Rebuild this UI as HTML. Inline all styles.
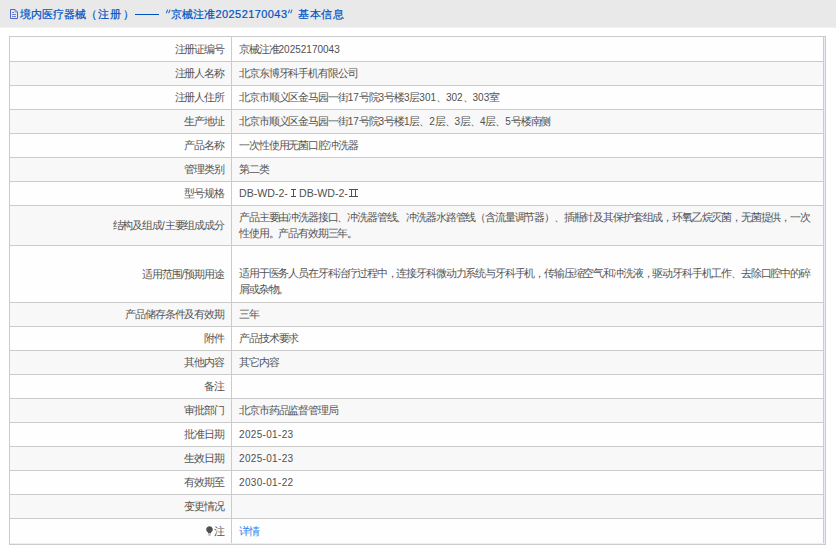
<!DOCTYPE html>
<html><head><meta charset="utf-8">
<style>
*{margin:0;padding:0;box-sizing:border-box}
html,body{width:836px;height:548px;overflow:hidden;background:#fff;font-family:"Liberation Sans",sans-serif;}
.hd{position:absolute;left:0;top:0;width:836px;height:28px;background:#e9e9e9;border-bottom:1px solid #eef0f6;}
.hd .t{position:absolute;top:6px;font-size:11px;line-height:16px;color:#0052c2;white-space:nowrap;-webkit-text-stroke:0.2px #0052c2}
.hd svg{position:absolute;left:10px;top:9px}
.ob{position:absolute;left:9px;top:36px;width:817px;height:509px;border:1px solid #cbcbcb;background:#eceef6}
.r{position:absolute;left:10px;width:814px;border-right:1px solid #cbcbcb;}
.r.o{background:#fefefe}
.r.e{background:#f8f8f8}
.hl{position:absolute;left:10px;width:814px;height:1px;background:#cbcbcb}
.vl{position:absolute;left:231px;top:37px;width:1px;height:506px;background:#cbcbcb}
.l{position:absolute;left:0;top:0;bottom:0;width:221px;}
.lt{position:absolute;right:7px;font-size:11px;letter-spacing:-1.12px;line-height:16px;color:#555;white-space:nowrap}
.v{position:absolute;left:229px;right:8px;font-size:11px;letter-spacing:-1.12px;line-height:16px;color:#555;white-space:nowrap}
.n{font-size:10px;letter-spacing:0;color:#505050}
.rn{font-family:"Liberation Serif",serif;font-size:10px;letter-spacing:0}
.v a{color:#2f83f0}

</style></head><body>
<div class="hd">
<svg width="8" height="10" viewBox="0 0 8 10"><path d="M0.5 0.5H5L7.5 3V9.5H0.5Z" fill="none" stroke="#4468d0" stroke-width="1"/><path d="M5 0.5V3H7.5" fill="none" stroke="#5b8ad8" stroke-width="0.8"/><path d="M2 3.5H4M2 5.5H6M2 7.5H6" stroke="#7b80d4" stroke-width="1"/></svg>
<span class="t" style="left:20px">境内医疗器械</span>
<span class="t" style="left:86px">（</span>
<span class="t" style="left:98px;letter-spacing:0.5px">注册</span>
<span class="t" style="left:123px">）</span>
<div style="position:absolute;left:135px;top:14px;width:24px;height:1px;background:#0052c2"></div>
<svg style="position:absolute;left:165px;top:9px" width="6" height="5" viewBox="0 0 6 5"><path d="M2.6 0.6L1.3 4.2M5.0 0.6L3.7 4.2" stroke="#2a6cd0" stroke-width="1.1" fill="none"/></svg>
<span class="t" style="left:171px">京械注准</span>
<span class="t" style="left:215.5px;letter-spacing:0.42px">20252170043</span>
<svg style="position:absolute;left:287px;top:9px" width="6" height="5" viewBox="0 0 6 5"><path d="M2.6 0.6L1.3 4.2M5.0 0.6L3.7 4.2" stroke="#2a6cd0" stroke-width="1.1" fill="none"/></svg>
<span class="t" style="left:298px;letter-spacing:0.5px">基本信息</span>
</div>
<div class="ob"></div>
<div class="r o" style="top:37px;height:24px"><div class="l"><span class="lt" style="top:4px">注册证编号</span></div><div class="v" style="top:4px">京械注准<span class="n">20252170043</span></div></div>
<div class="hl" style="top:61px"></div>
<div class="r e" style="top:62px;height:23px"><div class="l"><span class="lt" style="top:3px">注册人名称</span></div><div class="v" style="top:3px">北京东博牙科手机有限公司</div></div>
<div class="hl" style="top:85px"></div>
<div class="r o" style="top:86px;height:23px"><div class="l"><span class="lt" style="top:3px">注册人住所</span></div><div class="v" style="top:3px">北京市顺义区金马园一街<span class="n">17</span>号院<span class="n">3</span>号楼<span class="n">3</span>层<span class="n">301</span>、<span class="n">302</span>、<span class="n">303</span>室</div></div>
<div class="hl" style="top:109px"></div>
<div class="r e" style="top:110px;height:23px"><div class="l"><span class="lt" style="top:3px">生产地址</span></div><div class="v" style="top:3px">北京市顺义区金马园一街<span class="n">17</span>号院<span class="n">3</span>号楼<span class="n">1</span>层、<span class="n">2</span>层、<span class="n">3</span>层、<span class="n">4</span>层、<span class="n">5</span>号楼南侧</div></div>
<div class="hl" style="top:133px"></div>
<div class="r o" style="top:134px;height:23px"><div class="l"><span class="lt" style="top:3px">产品名称</span></div><div class="v" style="top:3px">一次性使用无菌口腔冲洗器</div></div>
<div class="hl" style="top:157px"></div>
<div class="r e" style="top:158px;height:23px"><div class="l"><span class="lt" style="top:3px">管理类别</span></div><div class="v" style="top:3px">第二类</div></div>
<div class="hl" style="top:181px"></div>
<div class="r o" style="top:182px;height:23px"><div class="l"><span class="lt" style="top:3px">型号规格</span></div><span class="n" style="position:absolute;left:289px;top:3px;font-size:10.6px;line-height:16px;color:#505050">DB-WD-2-</span><svg style="position:absolute;left:281px;top:7px" width="6" height="8" viewBox="0 0 6 8"><path d="M0 0.5H5M0 7.5H5M2.5 0V8" stroke="#505050" stroke-width="1" fill="none"/></svg><svg style="position:absolute;left:339px;top:7px" width="9" height="8" viewBox="0 0 9 8"><path d="M0 0.5H9M0 7.5H9M2.5 0V8M6.5 0V8" stroke="#505050" stroke-width="1" fill="none"/></svg><div class="v" style="top:3px"><span class="n" style="font-size:10.6px">DB-WD-2-</span></div></div>
<div class="hl" style="top:205px"></div>
<div class="r e" style="top:206px;height:39px"><div class="l"><span class="lt" style="top:11px">结构及组成<span class="n">/</span>主要组成成分</span></div><div class="v" style="top:3px;letter-spacing:-1.158px">产品主要由冲洗器接口、冲洗器管线、冲洗器水路管线（含流量调节器）、插瓶针及其保护套组成，环氧乙烷灭菌，无菌提供，一次<br>性使用。产品有效期三年。</div></div>
<div class="hl" style="top:245px"></div>
<div class="r o" style="top:246px;height:56px"><div class="l"><span class="lt" style="top:20px">适用范围<span class="n">/</span>预期用途</span></div><div class="v" style="top:3px;letter-spacing:-1.158px"><br>适用于医务人员在牙科治疗过程中，连接牙科微动力系统与牙科手机，传输压缩空气和冲洗液，驱动牙科手机工作、去除口腔中的碎<br>屑或杂物。</div></div>
<div class="hl" style="top:302px"></div>
<div class="r e" style="top:303px;height:23px"><div class="l"><span class="lt" style="top:3px">产品储存条件及有效期</span></div><div class="v" style="top:3px">三年</div></div>
<div class="hl" style="top:326px"></div>
<div class="r o" style="top:327px;height:23px"><div class="l"><span class="lt" style="top:3px">附件</span></div><div class="v" style="top:3px">产品技术要求</div></div>
<div class="hl" style="top:350px"></div>
<div class="r e" style="top:351px;height:23px"><div class="l"><span class="lt" style="top:3px">其他内容</span></div><div class="v" style="top:3px">其它内容</div></div>
<div class="hl" style="top:374px"></div>
<div class="r o" style="top:375px;height:23px"><div class="l"><span class="lt" style="top:3px">备注</span></div><div class="v" style="top:3px"></div></div>
<div class="hl" style="top:398px"></div>
<div class="r e" style="top:399px;height:23px"><div class="l"><span class="lt" style="top:3px">审批部门</span></div><div class="v" style="top:3px">北京市药品监督管理局</div></div>
<div class="hl" style="top:422px"></div>
<div class="r o" style="top:423px;height:23px"><div class="l"><span class="lt" style="top:3px">批准日期</span></div><div class="v" style="top:3px"><span class="n" style="letter-spacing:0.33px">2025-01-23</span></div></div>
<div class="hl" style="top:446px"></div>
<div class="r e" style="top:447px;height:23px"><div class="l"><span class="lt" style="top:3px">生效日期</span></div><div class="v" style="top:3px"><span class="n" style="letter-spacing:0.33px">2025-01-23</span></div></div>
<div class="hl" style="top:470px"></div>
<div class="r o" style="top:471px;height:23px"><div class="l"><span class="lt" style="top:3px">有效期至</span></div><div class="v" style="top:3px"><span class="n" style="letter-spacing:0.33px">2030-01-22</span></div></div>
<div class="hl" style="top:494px"></div>
<div class="r e" style="top:495px;height:23px"><div class="l"><span class="lt" style="top:3px">变更情况</span></div><div class="v" style="top:3px"></div></div>
<div class="hl" style="top:518px"></div>
<div class="r o" style="top:519px;height:24px"><div class="l"><svg style="position:absolute;left:196px;top:7px" width="7" height="10" viewBox="0 0 7 10"><path d="M3.5 0.3C1.6 0.3 0.2 1.7 0.2 3.5C0.2 4.9 1.2 5.8 2 6.6V7.3H5V6.6C5.8 5.8 6.8 4.9 6.8 3.5C6.8 1.7 5.4 0.3 3.5 0.3Z" fill="#505050"/><path d="M2.2 8H4.8M2.5 9.2H4.5" stroke="#9a9a9a" stroke-width="0.9"/></svg><span class="lt" style="top:4px">注</span></div><div class="v" style="top:4px"><a>详情</a></div></div>
<div class="vl"></div>
</body></html>
